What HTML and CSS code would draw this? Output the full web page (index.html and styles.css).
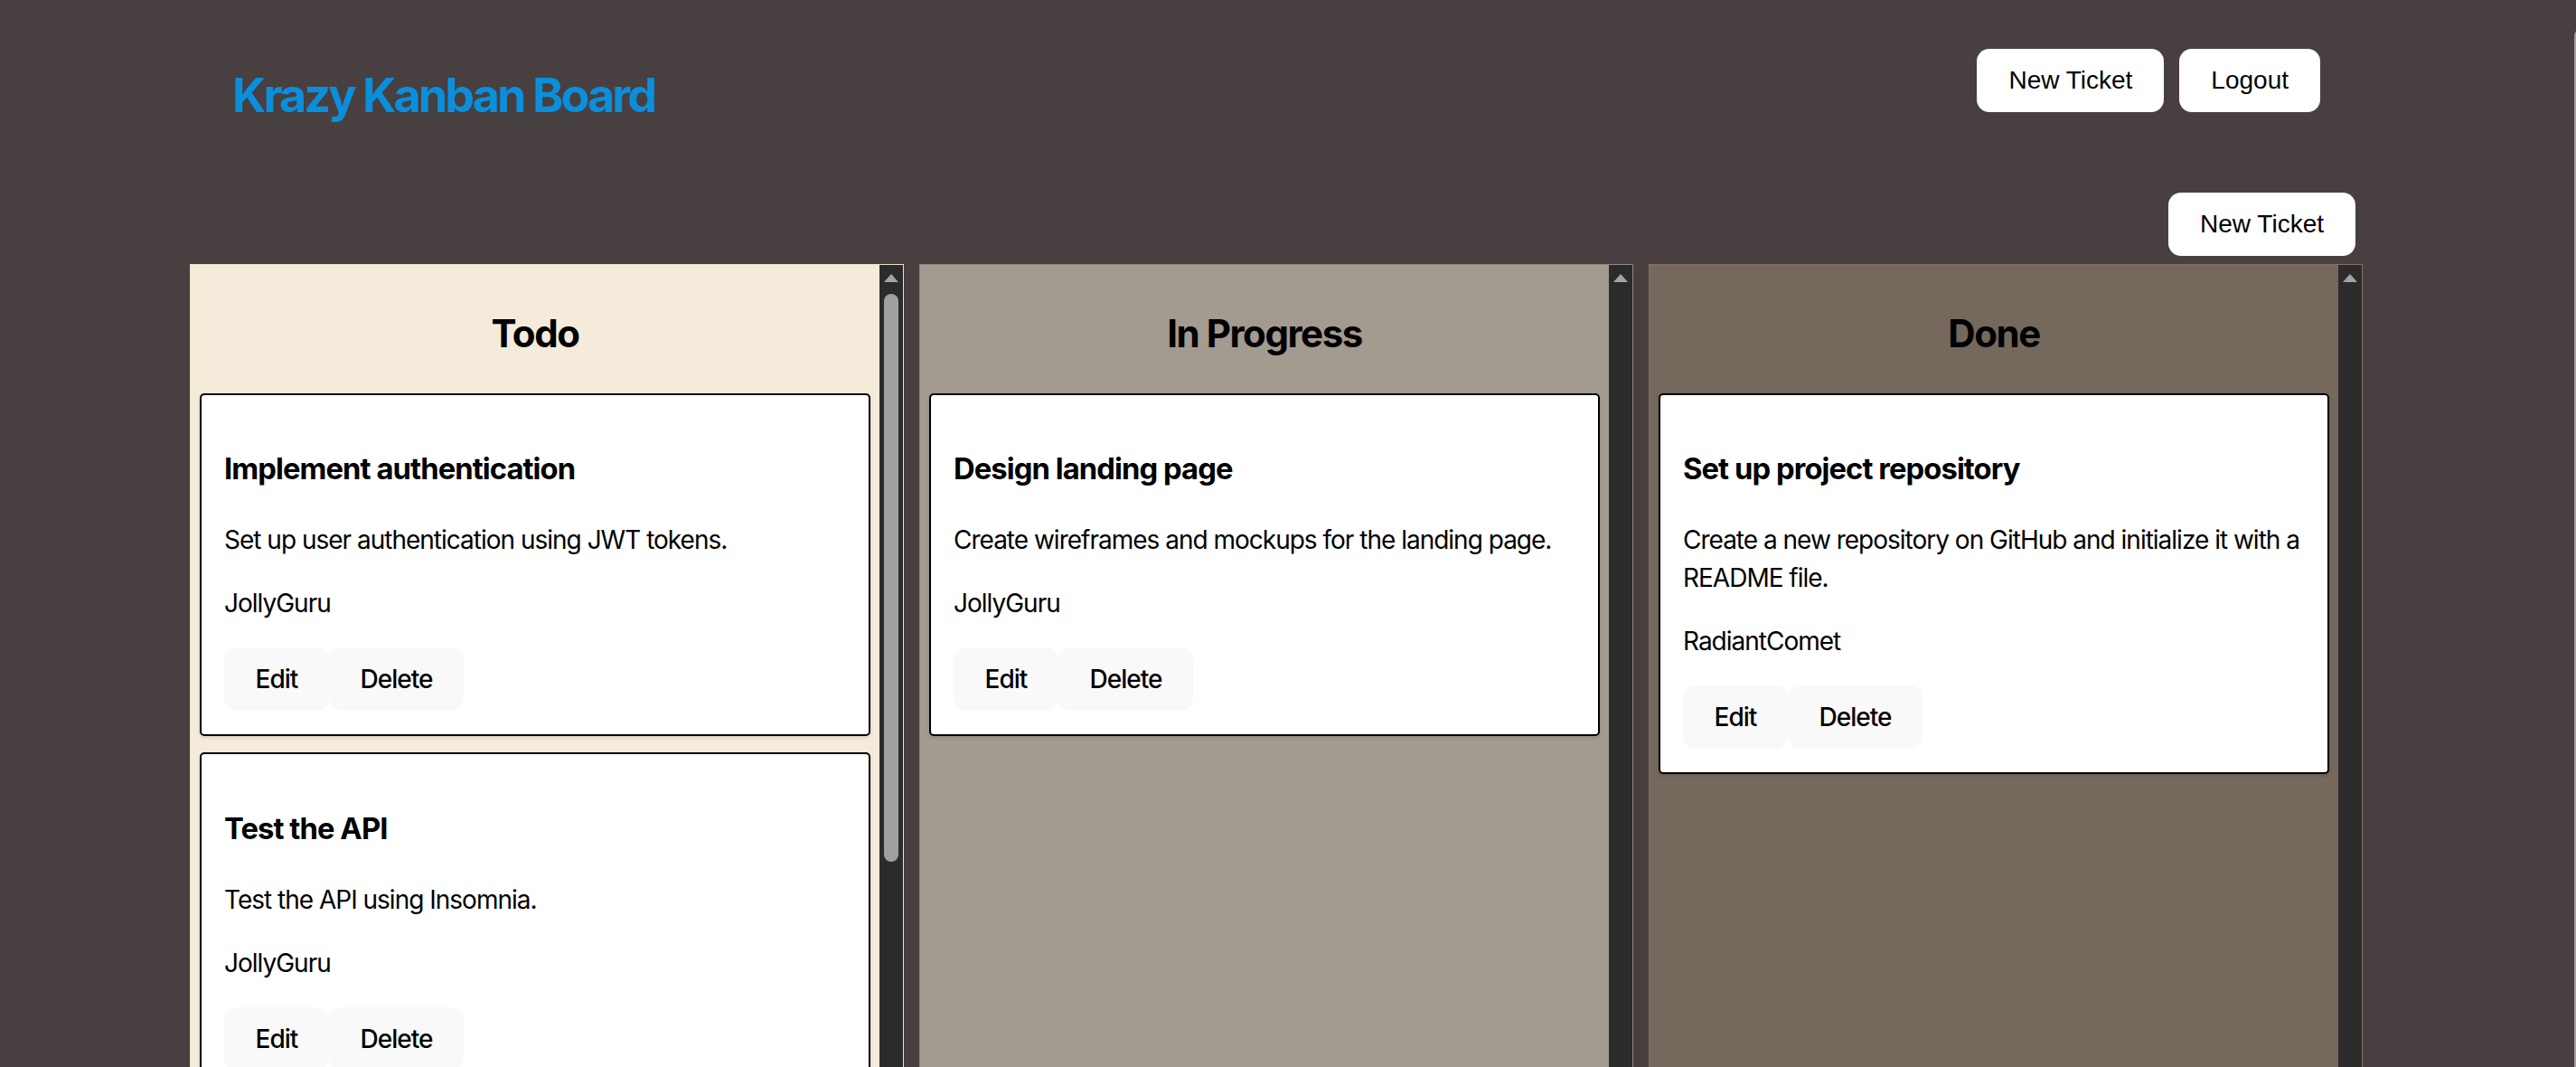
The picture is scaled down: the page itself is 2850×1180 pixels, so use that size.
FILE: index.html
```html
<!DOCTYPE html>
<html lang="en">
<head>
<meta charset="utf-8">
<title>Krazy Kanban Board</title>
<link rel="stylesheet" href="styles.css">
</head>
<body>
<div class="app">
  <header class="nav">
    <h1 class="brand">Krazy Kanban Board</h1>
    <div class="nav-actions">
      <button class="nav-btn">New Ticket</button>
      <button class="nav-btn">Logout</button>
    </div>
  </header>

  <main class="board-wrap">
    <div class="toolbar">
      <button class="nav-btn">New Ticket</button>
    </div>

    <div class="board">
      <section class="lane lane-todo">
        <div class="lane-body">
          <h2 class="lane-title">Todo</h2>
          <div class="card">
            <h3 class="card-title">Implement authentication</h3>
            <p class="card-text">Set up user authentication using JWT tokens.</p>
            <p class="card-text">JollyGuru</p>
            <div class="card-actions"><button class="btn">Edit</button><button class="btn">Delete</button></div>
          </div>
          <div class="card">
            <h3 class="card-title">Test the API</h3>
            <p class="card-text">Test the API using Insomnia.</p>
            <p class="card-text">JollyGuru</p>
            <div class="card-actions"><button class="btn">Edit</button><button class="btn">Delete</button></div>
          </div>
        </div>
        <div class="scrollbar"><span class="arrow"></span><span class="thumb" style="height:628px"></span></div>
      </section>

      <section class="lane lane-progress">
        <div class="lane-body">
          <h2 class="lane-title">In Progress</h2>
          <div class="card">
            <h3 class="card-title">Design landing page</h3>
            <p class="card-text">Create wireframes and mockups for the landing page.</p>
            <p class="card-text">JollyGuru</p>
            <div class="card-actions"><button class="btn">Edit</button><button class="btn">Delete</button></div>
          </div>
        </div>
        <div class="scrollbar"><span class="arrow"></span></div>
      </section>

      <section class="lane lane-done">
        <div class="lane-body">
          <h2 class="lane-title">Done</h2>
          <div class="card">
            <h3 class="card-title">Set up project repository</h3>
            <p class="card-text">Create a new repository on GitHub and initialize it with a README file.</p>
            <p class="card-text">RadiantComet</p>
            <div class="card-actions"><button class="btn">Edit</button><button class="btn">Delete</button></div>
          </div>
        </div>
        <div class="scrollbar"><span class="arrow"></span></div>
      </section>
    </div>
  </main>
  <div class="page-scroll"></div>
</div>
</body>
</html>
```

FILE: styles.css
```css
* {
  box-sizing: border-box;
}

html,
body {
  margin: 0;
  height: 100%;
}

body {
  background: #483f40;
  font-family: Inter, "Noto Sans", sans-serif;
  font-size: 28px;
  line-height: 1.5;
  letter-spacing: -1px;
  color: #000;
}

.app {
  width: calc(100% - 26px);
  height: 100vh;
  overflow: hidden;
}

/* header */
.nav {
  width: 2310px;
  margin: 0 auto;
  display: flex;
  justify-content: space-between;
  align-items: flex-start;
}

.brand {
  margin: 74px 0 0;
  font-size: 52px;
  line-height: 63px;
  font-weight: 700;
  letter-spacing: -2.9px;
  color: #0a8fdc;
}

.nav-actions {
  margin-top: 54px;
  display: flex;
  gap: 17px;
}

.nav-btn {
  font-family: "Liberation Sans", Arial, sans-serif;
  font-size: 28px;
  font-weight: 400;
  line-height: 32px;
  letter-spacing: 0;
  padding: 17px 33px;
  border: 2px solid transparent;
  border-radius: 14px;
  background: #fff;
  color: #000;
  cursor: pointer;
}

/* board */
.board-wrap {
  width: 2404px;
  margin: 0 auto;
}

.toolbar {
  margin-top: 76px;
  padding-right: 8px;
  display: flex;
  justify-content: flex-end;
}

.board {
  margin-top: 9px;
  display: flex;
  gap: 17px;
}

.lane {
  width: 790px;
  height: 1200px;
  border: 1px solid;
  display: flex;
}

.lane-todo {
  background: #f4ebda;
  border-color: #ebe0cc;
}

.lane-progress {
  background: #a39a90;
  border-color: #8f8883;
}

.lane-done {
  background: #75685d;
  border-color: #827263;
}

.lane-body {
  flex: 1;
  min-width: 0;
  padding: 9px 10px 0;
  overflow: hidden;
}

.lane-title {
  margin: 34.86px 0;
  font-size: 42px;
  line-height: 63px;
  font-weight: 700;
  letter-spacing: -1.45px;
  text-align: center;
}

/* fake scrollbar */
.scrollbar {
  flex: none;
  width: 26px;
  background: #2b2b2b;
  display: flex;
  flex-direction: column;
  align-items: center;
  padding-top: 10px;
}

.arrow {
  width: 0;
  height: 0;
  border-left: 8.5px solid transparent;
  border-right: 8.5px solid transparent;
  border-bottom: 9px solid #a3a3a3;
}

.thumb {
  margin-top: 13px;
  width: 16px;
  border-radius: 8px;
  background: #9f9f9f;
}

/* cards */
.card {
  background: #fff;
  border: 2px solid #000;
  border-radius: 5px;
  padding: 25px 25px 26px;
  margin-bottom: 18px;
  box-shadow: 0 2px 4px rgba(0, 0, 0, 0.12);
}

.card-title {
  margin: 32.76px 0;
  font-size: 32.76px;
  line-height: 1.5;
  font-weight: 700;
  letter-spacing: -0.92px;
}

.card-text {
  margin: 28px 0;
  font-size: 28px;
  line-height: 42px;
}

.card-actions {
  display: flex;
}

.btn {
  font-family: inherit;
  font-size: 28px;
  font-weight: 500;
  line-height: 34px;
  letter-spacing: -1px;
  padding: 17px 33.6px;
  border: 1.75px solid transparent;
  border-radius: 14px;
  background: #f9f9f9;
  color: #000;
  cursor: pointer;
}

/* page scrollbar sliver at the window edge */
.page-scroll {
  position: fixed;
  top: 32px;
  right: -14px;
  width: 16px;
  height: 2000px;
  border-radius: 8px;
  background: #9f9f9f;
}
```
